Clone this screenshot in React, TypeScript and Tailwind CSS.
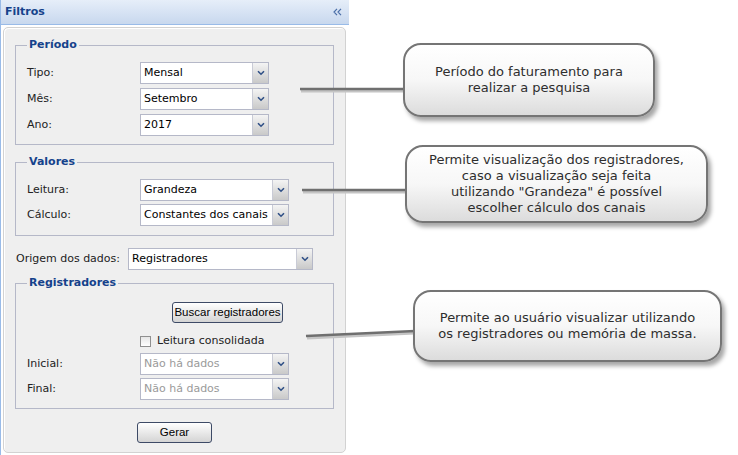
import React from 'react';

const font = "font-['DejaVu_Sans',Verdana,sans-serif]";

const Chevron = () => (
  <svg width="8" height="6" viewBox="0 0 8 6">
    <path d="M1 1.2 L4 4.2 L7 1.2" fill="none" stroke="#2f4f86" strokeWidth="1.6" />
  </svg>
);

type ComboProps = { value: string; width: string; disabled?: boolean };

const Combo = ({ value, width, disabled }: ComboProps) => (
  <div className={`flex h-[22px] ${width} border border-[#b5b8c8] bg-white`}>
    <div
      className={`flex flex-1 items-center overflow-hidden whitespace-nowrap pl-[3px] text-[11px] ${
        disabled ? 'text-[#9a9a9a]' : 'text-black'
      }`}
    >
      {value}
    </div>
    <div className="flex w-[16px] items-center justify-center border-l border-[#c9cbd6] bg-gradient-to-b from-[#f4f4f4] to-[#c9c9c9]">
      <Chevron />
    </div>
  </div>
);

const Row = ({ label, children }: { label: string; children: React.ReactNode }) => (
  <div className="flex items-center">
    <span className="w-[113px] text-[11px] text-[#222]">{label}</span>
    {children}
  </div>
);

const Legend = ({ text }: { text: string }) => (
  <legend className="px-[2px] text-[11px] leading-[14px] font-bold text-[#15428b]">{text}</legend>
);

const Btn = ({ text, className }: { text: string; className: string }) => (
  <button
    className={`h-[21px] rounded-[3px] border border-[#3d4a66] bg-gradient-to-b from-[#ffffff] to-[#d4d4d4] font-['Liberation_Sans',Arial,sans-serif] text-[11.5px] text-black ${className}`}
  >
    {text}
  </button>
);

const Callout = ({ className, lines }: { className: string; lines: string[] }) => (
  <div
    className={`absolute flex flex-col items-center justify-center rounded-[18px] border-2 border-[#757575] bg-gradient-to-b from-[#ffffff] via-[#f7f7f7] to-[#dcdcdc] text-[13px] leading-[16px] text-[#2e2e2e] shadow-[3px_4px_4px_rgba(0,0,0,0.35)] ${className}`}
  >
    {lines.map((l) => (
      <span key={l}>{l}</span>
    ))}
  </div>
);

export default function App() {
  return (
    <div className={`relative h-[455px] w-[738px] overflow-hidden bg-white ${font}`}>
      {/* Filtros panel */}
      <div className="flex h-full w-[349px] flex-col">
        <div className="flex h-[25px] items-center justify-between border-b border-l border-[#99bbe8] bg-gradient-to-b from-[#e6eef9] to-[#c8d8ee] pl-[4px] pr-[7px]">
          <span className="text-[11px] font-bold text-[#15428b]">Filtros</span>
          <svg width="9" height="8" viewBox="0 0 9 8">
            <path d="M4 0.8 L1 4 L4 7.2 M8 0.8 L5 4 L8 7.2" fill="none" stroke="#4b6fa8" strokeWidth="1.2" />
          </svg>
        </div>
        <div className="flex-1 border-l border-[#99bbe8] bg-white pb-[2px] pl-[2px] pr-[3px] pt-[2px]">
          <div className="flex h-full flex-col rounded-[5px] border border-[#d2d2d2] bg-[#efefef] px-[11px] pt-[10px] shadow-[inset_1px_1px_0_#ffffff]">
            <fieldset className="border border-[#b5b8c8] px-[11px] pb-[8px] pt-[10px]">
              <Legend text="Período" />
              <div className="flex flex-col gap-[4px]">
                <Row label="Tipo:">
                  <Combo value="Mensal" width="w-[129px]" />
                </Row>
                <Row label="Mês:">
                  <Combo value="Setembro" width="w-[129px]" />
                </Row>
                <Row label="Ano:">
                  <Combo value="2017" width="w-[129px]" />
                </Row>
              </div>
            </fieldset>

            <fieldset className="mt-[10px] border border-[#b5b8c8] px-[11px] pb-[9px] pt-[10px]">
              <Legend text="Valores" />
              <div className="flex flex-col gap-[3px]">
                <Row label="Leitura:">
                  <Combo value="Grandeza" width="w-[149px]" />
                </Row>
                <Row label="Cálculo:">
                  <Combo value="Constantes dos canais" width="w-[149px]" />
                </Row>
              </div>
            </fieldset>

            <div className="mt-[12px] flex items-center pl-[1px]">
              <span className="w-[112px] text-[11px] text-[#222]">Origem dos dados:</span>
              <Combo value="Registradores" width="w-[185px]" />
            </div>

            <fieldset className="mt-[6px] border border-[#b5b8c8] px-[11px] pb-[8px] pt-[9px]">
              <Legend text="Registradores" />
              <Btn text="Buscar registradores" className="ml-[145px] w-[111px]" />
              <div className="mt-[10px] flex h-[16px] items-center pl-[113px]">
                <span className="h-[11px] w-[11px] border border-[#8f8f8f] bg-gradient-to-b from-[#e6e6e6] to-[#ffffff]" />
                <span className="ml-[6px] text-[11px] text-[#222]">Leitura consolidada</span>
              </div>
              <div className="mt-[4px] flex flex-col gap-[3px]">
                <Row label="Inicial:">
                  <Combo value="Não há dados" width="w-[149px]" disabled />
                </Row>
                <Row label="Final:">
                  <Combo value="Não há dados" width="w-[149px]" disabled />
                </Row>
              </div>
            </fieldset>

            <div className="mt-[13px] flex justify-center">
              <Btn text="Gerar" className="w-[75px]" />
            </div>
          </div>
        </div>
      </div>

      {/* connector lines */}
      <svg className="absolute left-0 top-0" width="738" height="455">
        <g stroke="#c4c4c4" strokeWidth="3">
          <line x1="301" y1="91" x2="405" y2="91" />
          <line x1="303" y1="192" x2="407" y2="192" />
          <line x1="307" y1="338" x2="415" y2="333" />
        </g>
        <g stroke="#6f6f6f" strokeWidth="2.5">
          <line x1="300" y1="89" x2="405" y2="89" />
          <line x1="302" y1="190" x2="407" y2="190" />
          <line x1="306" y1="336" x2="415" y2="331" />
        </g>
      </svg>

      <Callout
        className="left-[403px] top-[43px] h-[74px] w-[252px]"
        lines={['Período do faturamento para', 'realizar a pesquisa']}
      />
      <Callout
        className="left-[405px] top-[145px] h-[78px] w-[303px]"
        lines={[
          'Permite visualização dos registradores,',
          'caso a visualização seja feita',
          'utilizando "Grandeza" é possível',
          'escolher cálculo dos canais',
        ]}
      />
      <Callout
        className="left-[413px] top-[290px] h-[72px] w-[309px]"
        lines={['Permite ao usuário visualizar utilizando', 'os registradores ou memória de massa.']}
      />
    </div>
  );
}
